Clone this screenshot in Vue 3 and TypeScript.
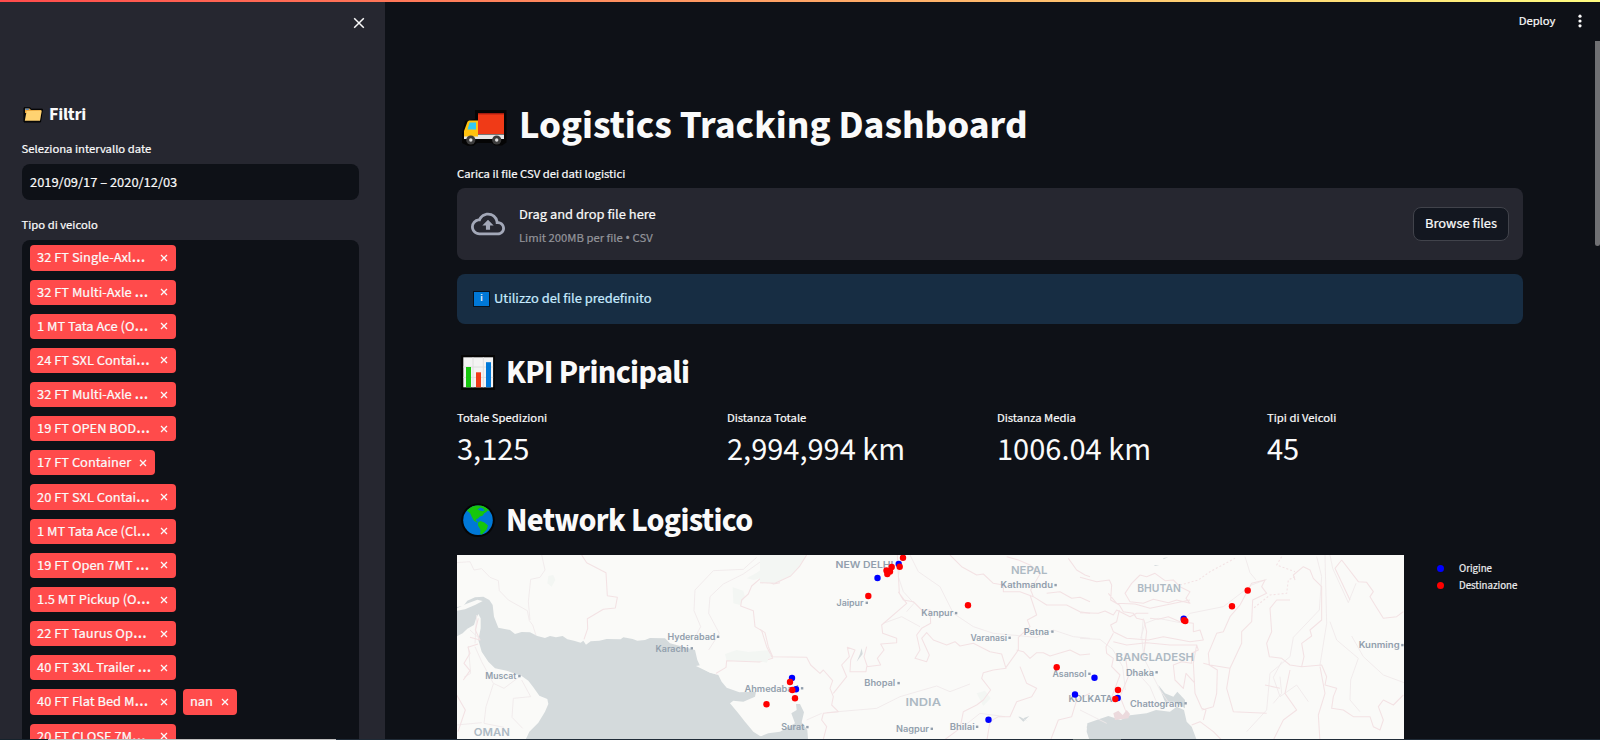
<script setup lang="ts">
interface Tag { text: string; cut?: boolean }
const tagRows: Tag[][] = [
  [{ text: '32 FT Single-Axl', cut: true }],
  [{ text: '32 FT Multi-Axle ', cut: true }],
  [{ text: '1 MT Tata Ace (O', cut: true }],
  [{ text: '24 FT SXL Contai', cut: true }],
  [{ text: '32 FT Multi-Axle ', cut: true }],
  [{ text: '19 FT OPEN BOD', cut: true }],
  [{ text: '17 FT Container' }],
  [{ text: '20 FT SXL Contai', cut: true }],
  [{ text: '1 MT Tata Ace (Cl', cut: true }],
  [{ text: '19 FT Open 7MT ', cut: true }],
  [{ text: '1.5 MT Pickup (O', cut: true }],
  [{ text: '22 FT Taurus Op', cut: true }],
  [{ text: '40 FT 3XL Trailer ', cut: true }],
  [{ text: '40 FT Flat Bed M', cut: true }, { text: 'nan' }],
  [{ text: '20 FT CLOSE 7M', cut: true }],
]
const metrics = [
  { label: 'Totale Spedizioni', value: '3,125' },
  { label: 'Distanza Totale', value: '2,994,994 km' },
  { label: 'Distanza Media', value: '1006.04 km' },
  { label: 'Tipi di Veicoli', value: '45' },
]
interface City { n: string; x: number; y: number; w: number; dot?: number }
const cities: City[] = [
  { n: 'Hyderabad', x: 667.5, y: 640, w: 48, dot: 718 },
  { n: 'Karachi', x: 655.5, y: 651.5, w: 33, dot: 691.7 },
  { n: 'Muscat', x: 485.3, y: 679.3, w: 31, dot: 519.3 },
  { n: 'Ahmedabad', x: 744.5, y: 691.5, w: 54, dot: 802 },
  { n: 'NEW DELHI', x: 835.5, y: 567.5, w: 58 },
  { n: 'Jaipur', x: 836.5, y: 606, w: 27, dot: 866.7 },
  { n: 'Kanpur', x: 921.3, y: 616.3, w: 32, dot: 956 },
  { n: 'Kathmandu', x: 1000.5, y: 588.3, w: 52.5, dot: 1055.5 },
  { n: 'Varanasi', x: 970.5, y: 641, w: 36.5, dot: 1009.5 },
  { n: 'Patna', x: 1023.7, y: 634.8, w: 25.5, dot: 1052.3 },
  { n: 'Bhopal', x: 864.3, y: 686.3, w: 31, dot: 898.5 },
  { n: 'Surat', x: 781.3, y: 730.3, w: 23, dot: 807.3 },
  { n: 'Nagpur', x: 896, y: 732, w: 33, dot: 931.7 },
  { n: 'Bhilai', x: 949.7, y: 730, w: 25, dot: 977 },
  { n: 'Asansol', x: 1052.5, y: 677, w: 34, dot: 1089.3 },
  { n: 'KOLKATA', x: 1068.5, y: 702, w: 44 },
  { n: 'Dhaka', x: 1126, y: 675.5, w: 28, dot: 1156.5 },
  { n: 'Chattogram', x: 1130, y: 706.5, w: 52.5, dot: 1185.5 },
  { n: 'Kunming', x: 1358.7, y: 648.3, w: 41, dot: 1402.3 },
]
const countries: City[] = [
  { n: 'OMAN', x: 473.8, y: 736, w: 36 },
  { n: 'INDIA', x: 905.5, y: 706.3, w: 35.5 },
  { n: 'NEPAL', x: 1011, y: 573.5, w: 36.5 },
  { n: 'BHUTAN', x: 1137.3, y: 592.3, w: 43.5 },
  { n: 'BANGLADESH', x: 1115.5, y: 660.8, w: 78.5 },
]
const origins: number[][] = [
  [898.7, 564], [877.5, 578], [792, 678], [796, 689.3], [988.5, 719.7], [1075, 694.5],
  [1094.5, 677.7], [1117.7, 698], [1183.7, 618.7],
]
const destinations: number[][] = [
  [903, 557.7], [899.7, 566.7], [891.7, 567], [886.5, 570.5], [890, 571.5], [887.3, 574],
  [868.3, 596], [968, 605.3], [766.5, 704.3], [790, 682], [792.3, 690], [795, 698.3],
  [1056.7, 667.3], [1118, 690], [1115.3, 699], [1184, 620.3], [1185.3, 621], [1232, 606.3], [1247.7, 590.5],
]
</script>

<template>
  <div class="app">
    <div class="rainbow"></div>
    <aside class="sidebar">
      <svg class="close" viewBox="0 0 12 12"><path d="M1.2 1.2 10.8 10.8M10.8 1.2 1.2 10.8" /></svg>
      <h2 class="filters">
        <svg class="folder" viewBox="0 0 20 16">
          <path d="M1 14.5V.8h6l1.5 1.4H19.4L17.5 15H1z" fill="#111" stroke="#000" />
          <path d="M2 13V1.5h4.5L8 3h10v3H2z" fill="#e8a33a" />
          <path d="M2.4 1.6h3.4v1.2H2.4z" fill="#2b7de0" />
          <path d="M3.6 4 18.8 3.4 17 13.8H1.8z" fill="#ffd271" />
        </svg>
        <span>Filtri</span>
      </h2>
      <div class="lab lab-date">Seleziona intervallo date</div>
      <div class="input">2019/09/17 – 2020/12/03</div>
      <div class="lab lab-type">Tipo di veicolo</div>
      <div class="select">
        <div v-for="(row, i) in tagRows" :key="i" class="tag-row">
          <span v-for="tag in row" :key="tag.text" class="tag" :class="{ cut: tag.cut }">
            <span class="tag-text">{{ tag.text }}<i v-if="tag.cut">…</i></span>
            <svg class="tag-x" viewBox="0 0 8 8"><path d="M1 1 7 7M7 1 1 7" /></svg>
          </span>
        </div>
      </div>
    </aside>

    <main class="main">
      <header class="toolbar">
        <span>Deploy</span>
        <svg class="kebab" viewBox="0 0 4 14"><circle cx="2" cy="2.2" r="1.6" /><circle cx="2" cy="7" r="1.6" /><circle cx="2" cy="11.8" r="1.6" /></svg>
      </header>
      <div class="scroll-thumb"></div>

      <h1 class="title">
        <svg class="truck" viewBox="0 0 46 36">
          <path d="M14 0h31.5v32.5L41 35.5h-7L30.5 33H16l-3.5 2.8h-6L1 33V24l3-13 10-2z" fill="#050505" />
          <path d="M17 3h26v21H17z" fill="#f03a17" />
          <path d="M17 3h26v1.4H17z" fill="#a51d10" />
          <path d="M3 28V21l3.5-9.2L8 10.5h9V28z" fill="#ffc20f" />
          <path d="M6.5 19.5 8.6 12.5H15v7z" fill="#32c8f3" />
          <path d="M3 26.5h14V24.5h26V29H3z" fill="#e6e6e6" />
          <circle cx="9.8" cy="30" r="4.6" fill="#3c3c3c" /><circle cx="9.8" cy="30" r="1.7" fill="#ddd" />
          <circle cx="35.7" cy="30" r="4.6" fill="#3c3c3c" /><circle cx="35.7" cy="30" r="1.7" fill="#ddd" />
        </svg>
        <span>Logistics Tracking Dashboard</span>
      </h1>
      <div class="lab lab-csv">Carica il file CSV dei dati logistici</div>
      <section class="uploader">
        <svg class="cloud" viewBox="0 0 24 24"><path d="M19.35 10.04A7.49 7.49 0 0 0 12 4C9.11 4 6.6 5.64 5.35 8.04A5.994 5.994 0 0 0 0 14c0 3.31 2.69 6 6 6h13c2.76 0 5-2.24 5-5 0-2.64-2.05-4.78-4.65-4.96zM19 18H6c-2.21 0-4-1.79-4-4s1.79-4 4-4h.71C7.37 7.69 9.48 6 12 6c3.04 0 5.5 2.46 5.5 5.5v.5H19c1.66 0 3 1.34 3 3s-1.34 3-3 3zM8 13h2.55v3h2.9v-3H16l-4-4z" /></svg>
        <div class="drop">
          <div class="drop-main">Drag and drop file here</div>
          <div class="drop-sub">Limit 200MB per file <i>•</i> CSV</div>
        </div>
        <button class="browse" type="button">Browse files</button>
      </section>
      <section class="info">
        <span class="info-icon">i</span>
        <span class="info-text">Utilizzo del file predefinito</span>
      </section>

      <h2 class="section kpi">
        <svg class="emoji" viewBox="0 0 34 35">
          <path d="M0 0h34v35H0z" fill="#050505" /><path d="M2.3 2.3h29.8v30H2.3z" fill="#f3f3f3" />
          <path d="M12 2.3v30M22.3 2.3v30M2.3 12h29.8M2.3 22.4h29.8" stroke="#dedede" />
          <path d="M5 12h5v20.3H5z" fill="#16c60c" /><path d="M15 17.3h5v15h-5z" fill="#f03a17" /><path d="M25 7.2h5v25.1h-5z" fill="#0078d7" />
        </svg>
        <span>KPI Principali</span>
      </h2>
      <div class="metrics">
        <div v-for="m in metrics" :key="m.label" class="metric">
          <div class="metric-label">{{ m.label }}</div>
          <div class="metric-value">{{ m.value }}</div>
        </div>
      </div>
      <h2 class="section network">
        <svg class="emoji" viewBox="0 0 34 35">
          <circle cx="17" cy="17.3" r="16.8" fill="#050505" /><circle cx="17" cy="17.3" r="14.8" fill="#0078d7" />
          <path d="M5.8 8C9 4 13 2.4 17.5 2.6c5 0 9 2.4 11.4 5.6l-2.4-.8-1 1.6-2.2 1.2-1.8 2.6-2.6.6-2 2.2-1.6.4-.6 1.8 2 1.2-.8.6-3-1.8-2.4-4.6-1.2-2.8-1.8-1.6z" fill="#16c60c" />
          <path d="M17 19.6 19.4 18l4 1.4 3.6 3-1.2 3.8-2.6 3-2.4 2.2-1.6-.4.2-4.6-2.4-4z" fill="#16c60c" />
          <path d="m16.5 6.4 3-1.8 2.6.8 1.4 2-2 .8-2.6-.6z" fill="#0078d7" />
        </svg>
        <span>Network Logistico</span>
      </h2>

      <div class="map-row">
        <svg class="map" viewBox="457 555 947 184">
          <rect x="457" y="555" width="947" height="184" fill="#fafaf8" />
          <g transform="translate(450 550) scale(.33333)">
            <path class="park" d="M990 22 960 40 920 68 890 85 912 90 940 82 960 100 990 95zM848 112 880 122 885 140 870 165 850 160zM825 312 860 300 895 306 960 300 968 320 930 336 830 332zM295 78 310 75 316 90 305 110 292 100z" />
            <path class="sea" d="M15 172 40 168 52 152 75 142 100 140 118 150 128 165 132 200 145 233 160 236 180 240 195 252 215 246 240 247 262 258 285 264 300 258 318 262 338 258 352 268 372 272 392 278 400 272 408 284 422 274 448 272 470 267 512 268 520 262 548 267 562 272 585 270 600 264 645 265 660 280 735 300 742 330 752 352 780 368 805 375 815 395 830 413 868 427 918 425 915 440 880 455 850 452 840 460 865 490 885 515 910 545 930 558 955 563 990 550V580H222L238 545 265 518 285 485 295 462 292 447 268 437 250 412 235 392 215 378 170 362 135 355 115 335 95 305 85 270 92 235 92 205 85 192 78 206 72 225 52 236 38 250 15 262z" />
            <path class="land" d="M18 176 48 162 82 149 98 153 75 165 45 178 18 183z" />
            <g class="roads"><path d="M20 38 60 35 72 60 95 56 120 82 145 92 148 122 175 150 232 182 238 212 248 225 258 256M275 15 285 60 270 82 242 88 235 155 240 210M735 262 752 230 732 182 735 120 790 62 880 58 920 22M776 300 808 250 776 190 780 140 820 102 880 72 950 22M75 290 95 335 130 400 162 415 215 375M130 402 108 470 102 520 162 532M215 390 242 440 190 445 186 502 218 535M20 525 95 518M80 195 75 280M60 240 84 262M55 288 62 370 42 382" /></g>
            <g class="borders"><path d="M395 15 410 38 468 68 472 137 502 142 496 174 460 178 412 206 413 236 402 268M990 98 970 102 935 82 905 108 895 132 875 150 872 168 910 182 915 230 935 242 950 290 968 325 928 336 830 332 828 352 795 372M20 435 46 480 24 545M84 282 54 292 60 310 42 340 60 362 40 390M85 205 76 240 90 270 60 262" /></g>
            <path class="land" d="M738 348 758 344 775 356 790 358 800 373 777 367z" />
          </g>
          <g transform="translate(760 550) scale(.33333)">
            <path class="park" d="M0 15H140L118 50 92 78 45 100 0 98zM0 308 32 312 20 338 0 334zM650 430 675 422 692 445 670 468z" />
            <path class="sea" d="M0 560 25 550 60 545 105 520 94 490 110 480 108 462 120 462 132 487 125 517 142 540 145 580H0zM305 295 308 312 290 335 300 312zM735 502 780 500 805 515 790 505 808 498 790 515 775 500zM992 520 980 530 985 555 992 575z" />
            <g class="roads"><path d="M425 20 415 80 430 125 462 160 440 185M450 15 475 65 540 110 580 190 640 230 700 250 830 262 880 240 940 260 990 265M200 488 350 475 420 440 530 408 570 425 630 402M610 530 660 490 735 500M185 490 140 510M480 230 425 200 370 220" /></g>
            <g class="borders"><path d="M0 98 45 100 92 78 118 50 140 15M0 238 15 248 25 290 38 320 140 322 152 345 180 370 190 360 218 392 210 415 220 440 215 465 235 485 190 490 185 510 200 530 188 575M412 15 418 130 440 160 365 225 368 250 410 265 410 278 362 282 372 300 352 325 362 345 320 350 318 365 270 365 272 330 285 300 262 292 268 320 245 345 260 380 220 430M320 290 312 320 322 350M415 125 430 150 460 155 485 180 510 180 512 220 485 235 470 255 480 300 465 325 500 335 508 315 485 265 500 248 520 270 560 285 585 275 600 288 640 280 690 305 725 312 738 355 700 360 670 368 665 385 692 420 670 450 650 465 610 485 600 535 550 572M570 15 605 50 650 75 670 72 700 100 730 105 730 125 780 125 820 140 860 165 920 165 960 185 990 190M740 20 775 30 810 45 840 72 812 120 820 140M810 135 830 195 802 210 810 230 775 262 775 300 738 352M770 300 790 305 810 325 830 308 850 308 870 318 890 312 930 300 960 315 990 312M780 350 800 400 830 415 815 440 770 455 750 500 715 500 690 515 680 575M925 25 950 60 975 75 990 80M860 130 900 125 935 145 960 142 990 155M990 430 950 450 935 500 895 510 870 575" /></g>
          </g>
          <g transform="translate(1080 550) scale(.33333)">
            <path class="sea" d="M22 520 50 510 85 498 122 510 150 496 200 490 228 480 270 485 290 470 312 480 320 515 335 530 352 575H30L20 545zM222 45 238 45 225 48zM250 24 265 22 250 28zM235 405 255 430 280 440 292 425 315 450 315 475 282 455 255 455zM395 15 410 14z" />
            <g class="roads"><path d="M0 265 60 268 98 298 128 350 136 420M190 205 185 260 192 325 240 420 275 470M160 355 210 410 235 470M182 265 195 220 235 205 300 218 330 190 430 170 515 105 560 88M495 20 510 68 528 90M710 20 725 80 718 180 640 262 630 320 570 370 560 480 500 545M735 15 740 220 720 345M750 15 758 55 805 158 828 100M815 258 850 320 910 375 972 398M750 215 770 270 835 325 812 390 810 450 840 485M0 480 40 500 80 520M605 335 580 382 600 440 650 405 685 455M600 380 605 430 580 460" /></g>
            <g class="borders"><path d="M0 82 50 95 88 90 95 105 92 150 118 165 130 185 160 190 170 205 192 210 200 245 190 325M0 188 55 190 75 183 100 195 110 180 150 200 170 190 205 190M180 75 200 80 225 70 255 92 280 90 300 110 330 125 318 145 330 160 290 150 265 158 220 148 190 160 150 155 135 130 155 100 180 75M85 130 110 160 165 162 210 175 330 150M118 180 110 215 92 225 100 245 140 265 205 270 250 260 330 275 370 270 360 240 340 245 340 220 300 215 265 200 235 208 210 205M100 250 78 290 80 310 100 325 95 350 120 375 90 455M100 275 140 285 200 278 270 285 350 285 340 340 345 430 365 475 378 480 370 510M350 285 355 300 335 310 335 340 305 335 280 345 285 390 310 415 318 370 345 400M135 310 145 380 120 440 140 490M370 340 390 345 450 355 485 280 485 245 515 215 518 150 560 130 545 110 555 90 515 100 480 165 450 200 430 245 410 250 385 310 388 345 412 360 410 430 400 470 365 480M450 355 440 415 460 485 560 490M645 90 640 75 670 50 690 60 700 85 725 110 725 210 690 240 695 258 665 280 672 320 665 350 725 345 740 380 735 405 770 415 760 440 755 475 790 480 820 500 870 500 880 530 900 540 910 510 895 470 910 450 940 465 970 435M630 150 590 150 570 175 575 245 560 280 568 320 605 325 630 345 665 350M785 30 835 95 860 97 880 125 870 140 885 165 910 205 950 200 970 185M785 30 765 55 810 150M335 525 360 515 400 545 430 575M720 350 735 430 715 495 720 575M600 415 555 405M630 360 615 430 650 480 610 510 580 570" /></g>
            <path class="borders dashed" d="M300 105 355 90 390 65 465 25M605 20 590 45 645 65M645 80 625 90 620 130 570 135 520 175" />
            <path class="delta" d="M100 490 115 482 128 495 140 480 150 492 145 505 105 510z" />
          </g>
          <g class="city">
            <template v-for="c in cities" :key="c.n">
              <text :x="c.x" :y="c.y" :textLength="c.w" lengthAdjust="spacingAndGlyphs">{{ c.n }}</text>
              <rect v-if="c.dot" :x="c.dot - 1.1" :y="c.y - 4.4" width="2.4" height="2.4" />
            </template>
          </g>
          <g class="country">
            <text v-for="c in countries" :key="c.n" :x="c.x" :y="c.y" :textLength="c.w" lengthAdjust="spacingAndGlyphs">{{ c.n }}</text>
          </g>
          <circle v-for="(p, i) in origins" :key="'o' + i" :cx="p[0]" :cy="p[1]" r="3.2" fill="#00f" />
          <circle v-for="(p, i) in destinations" :key="'d' + i" :cx="p[0]" :cy="p[1]" r="3.2" fill="#f00" />
        </svg>
        <div class="legend">
          <div class="key"><b class="origin"></b><span>Origine</span></div>
          <div class="key"><b class="dest"></b><span>Destinazione</span></div>
        </div>
      </div>
    </main>
    <div class="edge"></div>
  </div>
</template>

<style>
body { margin: 0; background: #0e1117; overflow: hidden; }
</style>

<style scoped>
* { box-sizing: border-box; }
h1, h2 { margin: 0; }
i { font-style: normal; font-family: "Noto Sans", sans-serif; line-height: 0; }
svg { display: block; flex: none; }
.app { position: relative; display: flex; width: 1600px; height: 740px; overflow: hidden; background: #0e1117; color: #fafafa; font-family: "Source Sans 3", "Source Sans Pro", "Noto Sans CJK SC", sans-serif; font-size: 14.4px; white-space: nowrap; -webkit-text-stroke: .2px currentColor; }
.rainbow { position: absolute; inset: 0 0 auto; height: 2px; background: linear-gradient(90deg, #ff4b4b, #fffd80); z-index: 3; }
.edge { position: absolute; inset: auto 0 0; height: 1px; background: linear-gradient(90deg, #16232d 48px, #bfbfbf 48px 336px, #202c38 336px 1073px, #5d6a6c 1073px 1121px, #202c38 1121px); z-index: 3; }
.sidebar { flex: none; width: 385px; height: 740px; padding: 17px 26px 0 22px; background: #262730; overflow: hidden; }
.close { width: 12px; height: 12px; margin-left: 331px; }
.close path, .tag-x path { fill: none; stroke: #fafafa; stroke-width: 1.5; }
.tag-x path { stroke-width: 1.3; }
.filters { display: flex; align-items: center; height: 30px; margin-top: 71px; font-size: 18px; font-weight: 700; line-height: 30px; letter-spacing: -.25px; -webkit-text-stroke: 0; }
.folder { width: 20px; height: 16px; margin: 0 6px 0 1px; }
.lab { font-size: 12.6px; line-height: 20px; height: 20px; }
.sidebar .lab { margin-left: -.5px; }
.lab-date { margin-top: 9px; }
.input { height: 36px; margin-top: 5px; padding-left: 8px; border-radius: 8px; background: #0e1117; line-height: 38px; }
.lab-type { margin-top: 15px; }
.select { height: 520px; margin-top: 5px; padding: 5.35px 8px; border-radius: 8px; background: #0e1117; }
.tag-row { display: flex; gap: 7px; height: 25.2px; margin-bottom: 8.98px; }
.tag { display: flex; align-items: center; justify-content: space-between; gap: 8px; height: 25.2px; padding: 0 8px 0 7px; border-radius: 4px; background: #ff4b4b; line-height: 25px; }
.tag.cut { width: 146px; }
.tag i { font-size: 17.5px; }
.tag-x { width: 8px; height: 8px; }
.main { position: relative; flex: 1; padding: 0 77px 0 72px; overflow: hidden; }
.toolbar { display: flex; align-items: center; justify-content: flex-end; height: 41px; gap: 22.5px; margin-right: -59px; font-size: 12.6px; }
.kebab { width: 4px; height: 14px; fill: #fafafa; }
.scroll-thumb { position: absolute; right: 0; top: 41px; width: 5px; height: 205px; background: #6f7073; border-radius: 0 0 3px 3px; }
.title { display: flex; align-items: center; height: 52px; margin-top: 59px; font-size: 39.6px; line-height: 52px; font-weight: 700; -webkit-text-stroke: 0; }
.truck { width: 46px; height: 36px; margin: 3px 12px 0 4px; }
.section { display: flex; align-items: center; height: 44px; font-size: 32.4px; line-height: 44px; font-weight: 700; letter-spacing: -.68px; -webkit-text-stroke: 0; }
.section span { margin-top: 2px; }
.emoji { width: 34px; height: 35px; margin: 0 11px 0 4px; }
.lab-csv { margin-top: 12px; }
.uploader { display: flex; align-items: center; height: 72px; margin-top: 4px; padding: 0 14px; border-radius: 8px; background: #262730; }
.cloud { width: 34px; height: 34px; fill: #a3a8b8; }
.drop { flex: 1; margin: 4px 0 0 14px; }
.drop-main { line-height: 24px; }
.drop-sub { font-size: 12.6px; line-height: 22px; color: #93949a; }
.browse { width: 96px; height: 34px; padding: 0; border: 1px solid #41434b; border-radius: 8px; background: #131720; color: #fafafa; font: inherit; line-height: 32px; }
.info { display: flex; align-items: center; height: 50px; margin-top: 14px; padding-left: 16px; border-radius: 8px; background: #172d43; color: #c7ebff; }
.info-icon { width: 17px; height: 16px; margin: -1px 4px 0 0; border: 1px solid #07111c; background: #0078d7; color: #fff; font-size: 10px; line-height: 13px; text-align: center; }
.info-text { margin-top: -2px; }
.kpi { margin-top: 26px; }
.metrics { display: grid; grid-template-columns: repeat(4, 254px); gap: 16px; margin-top: 14px; }
.metric-label { font-size: 12.6px; line-height: 20px; }
.metric-value { font-size: 32.4px; line-height: 44px; -webkit-text-stroke: 0; }
.network { margin-top: 26px; }
.map-row { display: flex; margin-top: 13px; }
.map { width: 947px; height: 184px; -webkit-text-stroke: 0; }
.sea { fill: #d4dadc; }
.land { fill: #fafaf8; }
.park { fill: #f3f6f3; }
.roads { fill: none; stroke: #f0e9ea; stroke-width: 2.6; stroke-linejoin: round; }
.borders { fill: none; stroke: #f3e2e4; stroke-width: 3.2; stroke-linejoin: round; }
.dashed { stroke-dasharray: 6 6; }
.delta { fill: #ecdadd; }
.city { font: 600 8.5px Inter, sans-serif; fill: #929fad; }
.country { font: 600 10.5px Inter, sans-serif; fill: #adb9c3; }
.legend { padding: 5px 0 0 33px; font-size: 10.8px; color: #ececee; }
.key { display: flex; align-items: center; height: 17px; line-height: 17px; }
.key b { width: 7px; height: 7px; margin-right: 15px; border-radius: 50%; }
.origin { background: #00f; }
.dest { background: #f00; }
</style>
